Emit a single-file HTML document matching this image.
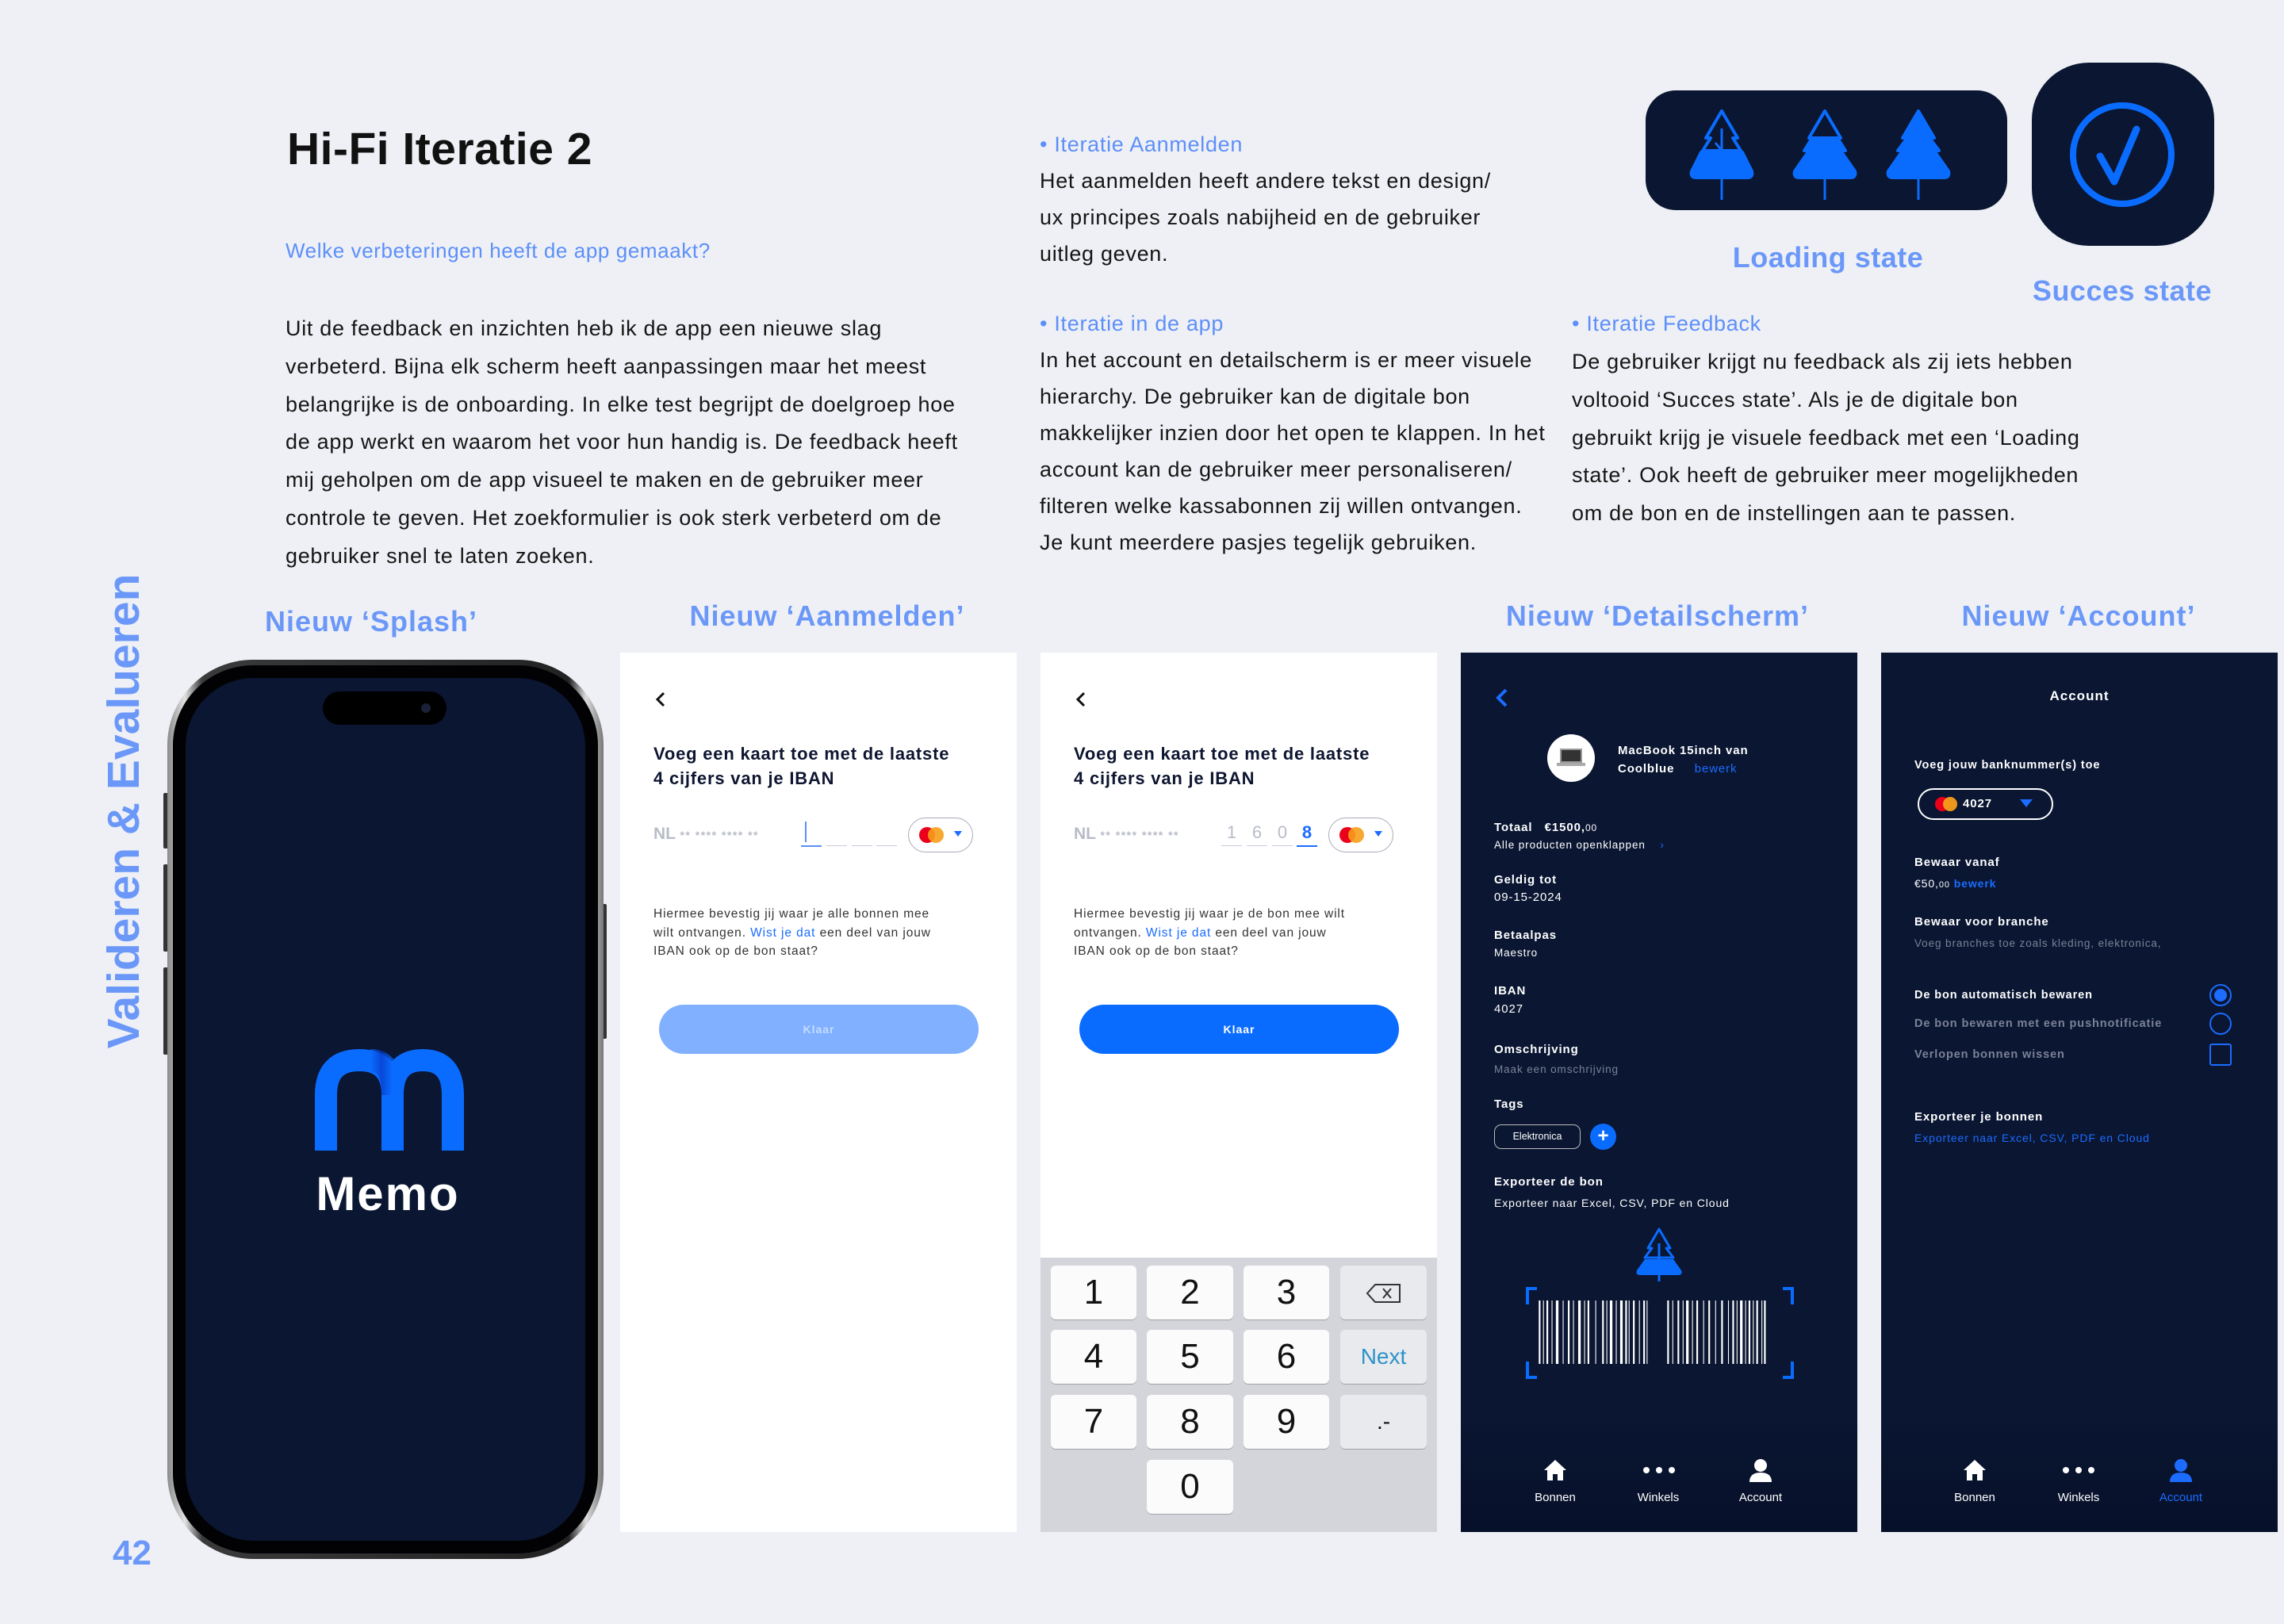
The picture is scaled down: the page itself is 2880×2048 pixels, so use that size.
<!DOCTYPE html>
<html><head><meta charset="utf-8"><style>
*{margin:0;padding:0;box-sizing:border-box}
body{width:2880px;height:2048px;background:#eef0f5;position:relative;overflow:hidden;font-family:"Liberation Sans",sans-serif;color:#151515}
.a{position:absolute;white-space:nowrap}
.t{font-size:27px;line-height:30px;letter-spacing:.7px}
.lb{color:#5d8ff8}
.nl{color:#6b98f8;font-size:36px;font-weight:bold;letter-spacing:1px;line-height:40px;transform:translateX(-50%)}
.scr{position:absolute;top:823px;width:500px;height:1109px;overflow:hidden}
.w{background:#fff}
.d{background:#0a1632}
.s{font-size:15px;line-height:20px;letter-spacing:.9px}
.b{font-weight:bold}
.g{color:#7b8296}
.bl{color:#1b6cff}
.key{position:absolute;background:#fbfbfb;border-radius:6px;box-shadow:0 1px 0 #9ea2a8;font-size:44px;color:#111;text-align:center;line-height:68px}
.kg{background:#e9eaed}
</style></head><body>

<div class="a" style="left:362px;top:158px;font-size:57px;font-weight:bold;line-height:60px;color:#111;letter-spacing:.5px">Hi-Fi Iteratie 2</div>
<div class="a lb" style="left:360px;top:301px;font-size:26px;line-height:30px;letter-spacing:.6px">Welke verbeteringen heeft de app gemaakt?</div>

<div class="a t" style="left:360px;top:391px;line-height:47.8px">Uit de feedback en inzichten heb ik de app een nieuwe slag<br>verbeterd. Bijna elk scherm heeft aanpassingen maar het meest<br>belangrijke is de onboarding. In elke test begrijpt de doelgroep hoe<br>de app werkt en waarom het voor hun handig is. De feedback heeft<br>mij geholpen om de app visueel te maken en de gebruiker meer<br>controle te geven. Het zoekformulier is ook sterk verbeterd om de<br>gebruiker snel te laten zoeken.</div>

<div class="a t lb" style="left:1311px;top:167px">• Iteratie Aanmelden</div>
<div class="a t" style="left:1311px;top:205px;line-height:46px">Het aanmelden heeft andere tekst en design/<br>ux principes zoals nabijheid en de gebruiker<br>uitleg geven.</div>

<div class="a t lb" style="left:1311px;top:393px">• Iteratie in de app</div>
<div class="a t" style="left:1311px;top:431px;line-height:46px">In het account en detailscherm is er meer visuele<br>hierarchy. De gebruiker kan de digitale bon<br>makkelijker inzien door het open te klappen. In het<br>account kan de gebruiker meer personaliseren/<br>filteren welke kassabonnen zij willen ontvangen.<br>Je kunt meerdere pasjes tegelijk gebruiken.</div>

<div class="a t lb" style="left:1982px;top:393px">• Iteratie Feedback</div>
<div class="a t" style="left:1982px;top:433px;line-height:47.8px">De gebruiker krijgt nu feedback als zij iets hebben<br>voltooid ‘Succes state’. Als je de digitale bon<br>gebruikt krijg je visuele feedback met een ‘Loading<br>state’. Ook heeft de gebruiker meer mogelijkheden<br>om de bon en de instellingen aan te passen.</div>

<!-- loading box -->
<div class="a" style="left:2075px;top:114px;width:456px;height:151px;background:#0a1632;border-radius:38px"></div>
<svg class="a" style="left:2075px;top:114px" width="456" height="151" viewBox="0 0 456 151">
 <g fill="#0a6cff" stroke="#0a6cff" stroke-width="4" stroke-linejoin="round">
  <g transform="translate(96,26)"><path d="M0 0 L20 34 L14 34 L24 50 L-24 50 L-14 34 L-20 34 Z" fill="none"/><path d="M-26 52 L26 52 L38 76 Q40 84 32 84 L-32 84 Q-40 84 -38 76 Z"/><path d="M0 22 V112 M-8 40 L0 50" fill="none" stroke-width="3"/></g>
  <g transform="translate(226,26)"><path d="M0 0 L20 34 L-20 34 Z" fill="none"/><path d="M-16 34 L16 34 L26 50 L20 50 L38 76 Q40 84 32 84 L-32 84 Q-40 84 -38 76 L-20 50 L-26 50 Z"/><path d="M0 84 V112" fill="none" stroke-width="3"/></g>
  <g transform="translate(344,26)"><path d="M0 0 L20 34 L14 34 L26 50 L20 50 L38 76 Q40 84 32 84 L-32 84 Q-40 84 -38 76 L-20 50 L-26 50 L-14 34 L-20 34 Z"/><path d="M0 84 V112" fill="none" stroke-width="3"/></g>
 </g>
</svg>
<!-- success -->
<div class="a" style="left:2562px;top:79px;width:230px;height:231px;background:#0a1632;border-radius:72px"></div>
<svg class="a" style="left:2562px;top:79px" width="230" height="231" viewBox="0 0 230 231">
 <circle cx="114" cy="116" r="62" fill="none" stroke="#0a6cff" stroke-width="8"/>
 <path d="M86 118 L104 150 L132 84" fill="none" stroke="#0a6cff" stroke-width="9" stroke-linecap="round" stroke-linejoin="round"/>
</svg>
<div class="a nl" style="left:2305px;top:305px;font-size:36px;letter-spacing:.5px">Loading state</div>
<div class="a nl" style="left:2676px;top:347px;font-size:36px;letter-spacing:.5px">Succes state</div>

<!-- vertical -->
<div class="a" style="left:156px;top:1023px;transform:translate(-50%,-50%) rotate(-90deg);font-family:'Liberation Sans Narrow','Liberation Sans',sans-serif;font-weight:bold;font-size:57px;color:#6b98f8;line-height:64px">Valideren &amp; Evalueren</div>
<div class="a" style="left:142px;top:1936px;font-size:44px;font-weight:bold;color:#6b98f8;line-height:46px">42</div>

<div class="a nl" style="left:468px;top:764px">Nieuw ‘Splash’</div>
<div class="a nl" style="left:1043px;top:757px">Nieuw ‘Aanmelden’</div>
<div class="a nl" style="left:2090px;top:757px">Nieuw ‘Detailscherm’</div>
<div class="a nl" style="left:2621px;top:757px">Nieuw ‘Account’</div>

<!-- phone -->
<div class="a" style="left:206px;top:1000px;width:6px;height:70px;background:#333;border-radius:2px"></div>
<div class="a" style="left:206px;top:1090px;width:6px;height:110px;background:#333;border-radius:2px"></div>
<div class="a" style="left:206px;top:1220px;width:6px;height:110px;background:#333;border-radius:2px"></div>
<div class="a" style="left:759px;top:1140px;width:6px;height:170px;background:#333;border-radius:2px"></div>
<div class="a" style="left:211px;top:832px;width:550px;height:1134px;border-radius:108px;background:linear-gradient(90deg,#8a8a8a,#e2e2e2 4%,#3a3a3a 8%,#222 92%,#ddd 96%,#777);padding:7px">
 <div style="width:100%;height:100%;border-radius:101px;background:#020204;padding:16px">
  <div style="width:100%;height:100%;border-radius:86px;background:#0a1632;position:relative">
   <div style="position:absolute;left:173px;top:17px;width:156px;height:42px;border-radius:21px;background:#000"></div>
   <div style="position:absolute;left:297px;top:32px;width:12px;height:12px;border-radius:6px;background:#1a2035"></div>
  </div>
 </div>
</div>
<svg class="a" style="left:397px;top:1323px" width="188" height="128" viewBox="0 0 188 128">
 <defs><linearGradient id="mg" x1="0" x2="1"><stop offset="0" stop-color="#0a6cff"/><stop offset=".5" stop-color="#0638c8"/><stop offset="1" stop-color="#0a6cff"/></linearGradient></defs>
 <path d="M14 128 V58 Q14 14 56 14 Q98 14 98 58 V128" fill="none" stroke="#0a6cff" stroke-width="28"/>
 <path d="M98 128 V58 Q98 14 136 14 Q174 14 174 58 V128" fill="none" stroke="#0a6cff" stroke-width="28"/>
 <path d="M70 14 Q98 14 98 58" fill="none" stroke="url(#mg)" stroke-width="28" opacity=".7"/>
</svg>
<div class="a" style="left:489px;top:1474px;transform:translateX(-50%);font-size:60px;font-weight:bold;color:#fff;line-height:64px;letter-spacing:2px">Memo</div>

<!-- screen 1 -->
<div class="scr w" style="left:782px">
 <svg class="a" style="left:42px;top:48px" width="20" height="22"><path d="M13 3 L5 11 L13 19" fill="none" stroke="#111" stroke-width="3"/></svg>
 <div class="a b" style="left:42px;top:112px;font-size:22px;line-height:31px;color:#0d1530;letter-spacing:.8px">Voeg een kaart toe met de laatste<br>4 cijfers van je IBAN</div>
 <div class="a" style="left:42px;top:217px;font-size:21px;font-weight:bold;color:#b8bcc8;line-height:24px">NL <span style="font-size:14px;letter-spacing:1.5px">** **** **** **</span></div>
 <div class="a" style="left:233px;top:213px;width:2px;height:26px;background:#5b8ff8"></div>
 <div class="a" style="left:228px;top:243px;width:26px;height:2px;background:#5b8ff8"></div>
 <div class="a" style="left:260px;top:243px;width:26px;height:1px;background:#ccd"></div>
 <div class="a" style="left:292px;top:243px;width:26px;height:1px;background:#ccd"></div>
 <div class="a" style="left:323px;top:243px;width:26px;height:1px;background:#ccd"></div>
 <div class="a" style="left:363px;top:208px;width:82px;height:44px;border:1.5px solid #aab;border-radius:22px"></div>
 <div class="a" style="left:377px;top:220px;width:20px;height:20px;border-radius:10px;background:#eb001b"></div>
 <div class="a" style="left:388px;top:220px;width:20px;height:20px;border-radius:10px;background:#f79e1b;opacity:.9"></div>
 <svg class="a" style="left:421px;top:225px" width="10" height="8"><path d="M0 0H10L5 7Z" fill="#1b6cff"/></svg>
 <div class="a s" style="left:42px;top:318px;font-size:15.5px;line-height:23.5px;color:#333;letter-spacing:.9px">Hiermee bevestig jij waar je alle bonnen mee<br>wilt ontvangen. <span class="bl">Wist je dat</span> een deel van jouw<br>IBAN ook op de bon staat?</div>
 <div class="a" style="left:49px;top:444px;width:403px;height:62px;border-radius:31px;background:#80b0ff;color:#c6dcff;font-size:14px;font-weight:bold;text-align:center;line-height:62px;letter-spacing:1px">Klaar</div>
</div>

<!-- screen 2 -->
<div class="scr w" style="left:1312px">
 <svg class="a" style="left:42px;top:48px" width="20" height="22"><path d="M13 3 L5 11 L13 19" fill="none" stroke="#111" stroke-width="3"/></svg>
 <div class="a b" style="left:42px;top:112px;font-size:22px;line-height:31px;color:#0d1530;letter-spacing:.8px">Voeg een kaart toe met de laatste<br>4 cijfers van je IBAN</div>
 <div class="a" style="left:42px;top:217px;font-size:21px;font-weight:bold;color:#b8bcc8;line-height:24px">NL <span style="font-size:14px;letter-spacing:1.5px">** **** **** **</span></div>
 <div class="a" style="left:228px;top:214px;width:26px;text-align:center;font-size:22px;color:#b8bcc8;line-height:26px">1</div>
 <div class="a" style="left:260px;top:214px;width:26px;text-align:center;font-size:22px;color:#b8bcc8;line-height:26px">6</div>
 <div class="a" style="left:292px;top:214px;width:26px;text-align:center;font-size:22px;color:#b8bcc8;line-height:26px">0</div>
 <div class="a b" style="left:323px;top:214px;width:26px;text-align:center;font-size:22px;color:#1b6cff;line-height:26px">8</div>
 <div class="a" style="left:228px;top:243px;width:26px;height:1px;background:#ccd"></div>
 <div class="a" style="left:260px;top:243px;width:26px;height:1px;background:#ccd"></div>
 <div class="a" style="left:292px;top:243px;width:26px;height:1px;background:#ccd"></div>
 <div class="a" style="left:323px;top:243px;width:26px;height:2px;background:#1b6cff"></div>
 <div class="a" style="left:363px;top:208px;width:82px;height:44px;border:1.5px solid #aab;border-radius:22px"></div>
 <div class="a" style="left:377px;top:220px;width:20px;height:20px;border-radius:10px;background:#eb001b"></div>
 <div class="a" style="left:388px;top:220px;width:20px;height:20px;border-radius:10px;background:#f79e1b;opacity:.9"></div>
 <svg class="a" style="left:421px;top:225px" width="10" height="8"><path d="M0 0H10L5 7Z" fill="#1b6cff"/></svg>
 <div class="a s" style="left:42px;top:318px;font-size:15.5px;line-height:23.5px;color:#333;letter-spacing:.9px">Hiermee bevestig jij waar je de bon mee wilt<br>ontvangen. <span class="bl">Wist je dat</span> een deel van jouw<br>IBAN ook op de bon staat?</div>
 <div class="a" style="left:49px;top:444px;width:403px;height:62px;border-radius:31px;background:#0a6cff;color:#fff;font-size:14px;font-weight:bold;text-align:center;line-height:62px;letter-spacing:1px">Klaar</div>
 <div class="a" style="left:0;top:763px;width:500px;height:346px;background:#d3d5da"></div>
 <div class="key" style="left:13px;top:773px;width:108px">1</div>
 <div class="key" style="left:134px;top:773px;width:109px">2</div>
 <div class="key" style="left:256px;top:773px;width:108px">3</div>
 <div class="key kg" style="left:378px;top:773px;width:109px"><svg width="46" height="26" viewBox="0 0 46 26" style="margin-top:21px"><path d="M12 2H43V24H12L2 13Z" fill="none" stroke="#333" stroke-width="2"/><path d="M22 7L32 19M32 7L22 19" stroke="#333" stroke-width="2"/></svg></div>
 <div class="key" style="left:13px;top:854px;width:108px">4</div>
 <div class="key" style="left:134px;top:854px;width:109px">5</div>
 <div class="key" style="left:256px;top:854px;width:108px">6</div>
 <div class="key kg" style="left:378px;top:854px;width:109px;font-size:28px;color:#2d93c8">Next</div>
 <div class="key" style="left:13px;top:936px;width:108px">7</div>
 <div class="key" style="left:134px;top:936px;width:109px">8</div>
 <div class="key" style="left:256px;top:936px;width:108px">9</div>
 <div class="key kg" style="left:378px;top:936px;width:109px;font-size:28px">.-</div>
 <div class="key kg" style="left:13px;top:1018px;width:108px"></div>
 <div class="key" style="left:134px;top:1018px;width:109px">0</div>
 <div class="key kg" style="left:256px;top:1018px;width:108px"></div>
 <div class="key kg" style="left:378px;top:1018px;width:109px"></div>
</div>

<!-- detail -->
<div class="scr d" style="left:1842px;color:#fff">
 <svg class="a" style="left:42px;top:44px" width="22" height="26"><path d="M15 3 L5 13 L15 23" fill="none" stroke="#1b6cff" stroke-width="4"/></svg>
 <div class="a" style="left:109px;top:103px;width:60px;height:60px;border-radius:30px;background:#fff"></div>
 <div class="a" style="left:125px;top:121px;width:28px;height:18px;background:#333;border:2px solid #999"></div>
 <div class="a" style="left:121px;top:139px;width:36px;height:4px;background:#aaa"></div>
 <div class="a s b" style="left:198px;top:112px;line-height:23px">MacBook 15inch van<br>Coolblue &nbsp;&nbsp;&nbsp;&nbsp;<span class="bl" style="font-weight:normal">bewerk</span></div>
 <div class="a s" style="left:42px;top:210px;line-height:22px"><b>Totaal &nbsp;&nbsp;€1500,</b><span style="font-size:12px">00</span><br><span style="font-size:13.5px">Alle producten openklappen &nbsp;&nbsp;&nbsp;<span class="bl">›</span></span></div>
 <div class="a s" style="left:42px;top:276px;line-height:22px"><b>Geldig tot</b><br>09-15-2024</div>
 <div class="a s" style="left:42px;top:346px;line-height:22px"><b>Betaalpas</b><br><span style="font-size:13.5px">Maestro</span></div>
 <div class="a s" style="left:42px;top:415px;line-height:23px"><b>IBAN</b><br>4027</div>
 <div class="a s" style="left:42px;top:488px;line-height:25px"><b>Omschrijving</b><br><span class="g" style="font-size:13.5px">Maak een omschrijving</span></div>
 <div class="a s b" style="left:42px;top:560px">Tags</div>
 <div class="a" style="left:42px;top:595px;width:109px;height:31px;border:1.5px solid #bbb;border-radius:9px;font-size:12.5px;text-align:center;line-height:28px">Elektronica</div>
 <div class="a" style="left:163px;top:594px;width:33px;height:33px;border-radius:17px;background:#0a6cff;text-align:center;font-size:24px;line-height:32px;font-weight:bold">+</div>
 <div class="a s" style="left:42px;top:654px;line-height:27px"><b>Exporteer de bon</b><br><span style="font-size:14px">Exporteer naar Excel, CSV, PDF en Cloud</span></div>
 <svg class="a" style="left:218px;top:725px" width="64" height="68" viewBox="0 0 64 68"><path d="M32 2 L46 26 L41 26 L50 38 L14 38 L23 26 L18 26 Z" fill="none" stroke="#0a6cff" stroke-width="3" stroke-linejoin="round"/><path d="M14 40 L50 40 L60 54 Q62 60 56 60 L8 60 Q2 60 4 54 Z" fill="#0a6cff"/><path d="M32 20 V68" stroke="#0a6cff" stroke-width="3"/></svg>
 <svg class="a" style="left:82px;top:800px" width="338" height="116" viewBox="0 0 338 116">
  <path d="M14 2H2V22M324 2H336V22M14 114H2V94M324 114H336V94" fill="none" stroke="#0a6cff" stroke-width="4"/>
  <g fill="#fff" transform="translate(-1,0) scale(1.08,1)">
   <rect x="16" y="17" width="2" height="80"/><rect x="21" y="17" width="1" height="80"/><rect x="25" y="17" width="2" height="80"/><rect x="31" y="17" width="1" height="80"/><rect x="36" y="17" width="3" height="80"/><rect x="44" y="17" width="1" height="80"/><rect x="50" y="17" width="2" height="80"/><rect x="56" y="17" width="1" height="80"/><rect x="62" y="17" width="3" height="80"/><rect x="69" y="17" width="1" height="80"/><rect x="73" y="17" width="2" height="80"/><rect x="82" y="17" width="1" height="80"/><rect x="90" y="17" width="2" height="80"/><rect x="95" y="17" width="1" height="80"/><rect x="99" y="17" width="3" height="80"/><rect x="106" y="17" width="1" height="80"/><rect x="111" y="17" width="3" height="80"/><rect x="117" y="17" width="2" height="80"/><rect x="121" y="17" width="1" height="80"/><rect x="126" y="17" width="2" height="80"/><rect x="133" y="17" width="1" height="80"/><rect x="138" y="17" width="2" height="80"/><rect x="142" y="17" width="1" height="80"/>
   <rect x="166" y="17" width="2" height="80"/><rect x="172" y="17" width="1" height="80"/><rect x="178" y="17" width="2" height="80"/><rect x="184" y="17" width="1" height="80"/><rect x="188" y="17" width="3" height="80"/><rect x="195" y="17" width="1" height="80"/><rect x="200" y="17" width="2" height="80"/><rect x="208" y="17" width="1" height="80"/><rect x="214" y="17" width="2" height="80"/><rect x="222" y="17" width="1" height="80"/><rect x="229" y="17" width="2" height="80"/><rect x="237" y="17" width="1" height="80"/><rect x="242" y="17" width="2" height="80"/><rect x="247" y="17" width="1" height="80"/><rect x="251" y="17" width="3" height="80"/><rect x="257" y="17" width="1" height="80"/><rect x="261" y="17" width="2" height="80"/><rect x="266" y="17" width="1" height="80"/><rect x="270" y="17" width="2" height="80"/><rect x="276" y="17" width="1" height="80"/><rect x="279" y="17" width="2" height="80"/>
  </g>
 </svg>
 <div class="a" style="left:0;top:960px;width:500px;height:149px;background:linear-gradient(#0a1632,#07102a)"></div>
 <svg class="a" style="left:104px;top:1016px" width="30" height="30" viewBox="0 0 30 30"><path d="M15 2 L29 15 H25 V28 H18 V20 H12 V28 H5 V15 H1 Z" fill="#fff"/></svg>
 <svg class="a" style="left:229px;top:1026px" width="42" height="10"><circle cx="5" cy="5" r="4" fill="#fff"/><circle cx="21" cy="5" r="4" fill="#fff"/><circle cx="37" cy="5" r="4" fill="#fff"/></svg>
 <svg class="a" style="left:363px;top:1016px" width="30" height="30" viewBox="0 0 30 30"><circle cx="15" cy="9" r="8" fill="#fff"/><path d="M1 30 Q1 18 15 18 Q29 18 29 30Z" fill="#fff"/></svg>
 <div class="a" style="left:119px;top:1057px;transform:translateX(-50%);font-size:15px;line-height:18px">Bonnen</div>
 <div class="a" style="left:249px;top:1057px;transform:translateX(-50%);font-size:15px;line-height:18px">Winkels</div>
 <div class="a" style="left:378px;top:1057px;transform:translateX(-50%);font-size:15px;line-height:18px">Account</div>
</div>

<!-- account -->
<div class="scr d" style="left:2372px;color:#fff">
 <div class="a s b" style="left:250px;top:45px;transform:translateX(-50%);font-size:17px;letter-spacing:1px">Account</div>
 <div class="a s b" style="left:42px;top:132px;font-size:14.5px">Voeg jouw banknummer(s) toe</div>
 <div class="a" style="left:46px;top:171px;width:171px;height:40px;border:2.5px solid #fff;border-radius:20px"></div>
 <div class="a" style="left:68px;top:182px;width:18px;height:18px;border-radius:9px;background:#eb001b"></div>
 <div class="a" style="left:78px;top:182px;width:18px;height:18px;border-radius:9px;background:#f79e1b;opacity:.95"></div>
 <div class="a s b" style="left:103px;top:181px">4027</div>
 <svg class="a" style="left:175px;top:185px" width="16" height="11"><path d="M0 0H16L8 10Z" fill="#1b6cff"/></svg>
 <div class="a s" style="left:42px;top:251px;line-height:27px"><b>Bewaar vanaf</b><br><span style="font-size:14px">€50,<span style="font-size:11px">00</span> <b class="bl">bewerk</b></span></div>
 <div class="a s" style="left:42px;top:326px;line-height:27px"><b>Bewaar voor branche</b><br><span class="g" style="font-size:13.5px">Voeg branches toe zoals kleding, elektronica,</span></div>
 <div class="a s b" style="left:42px;top:422px;font-size:14.5px">De bon automatisch bewaren</div>
 <div class="a s b g" style="left:42px;top:458px;font-size:14.5px">De bon bewaren met een pushnotificatie</div>
 <div class="a s b g" style="left:42px;top:497px;font-size:14.5px">Verlopen bonnen wissen</div>
 <div class="a" style="left:414px;top:418px;width:28px;height:28px;border-radius:14px;border:2px solid #1b6cff"></div>
 <div class="a" style="left:420px;top:424px;width:16px;height:16px;border-radius:8px;background:#1b6cff"></div>
 <div class="a" style="left:414px;top:454px;width:28px;height:28px;border-radius:14px;border:2px solid #1b6cff"></div>
 <div class="a" style="left:414px;top:493px;width:28px;height:28px;border-radius:3px;border:2px solid #1b6cff"></div>
 <div class="a s" style="left:42px;top:572px;line-height:27px"><b>Exporteer je bonnen</b><br><span class="bl" style="font-size:14px">Exporteer naar Excel, CSV, PDF en Cloud</span></div>
 <div class="a" style="left:0;top:960px;width:500px;height:149px;background:linear-gradient(#0a1632,#07102a)"></div>
 <svg class="a" style="left:103px;top:1016px" width="30" height="30" viewBox="0 0 30 30"><path d="M15 2 L29 15 H25 V28 H18 V20 H12 V28 H5 V15 H1 Z" fill="#fff"/></svg>
 <svg class="a" style="left:228px;top:1026px" width="42" height="10"><circle cx="5" cy="5" r="4" fill="#fff"/><circle cx="21" cy="5" r="4" fill="#fff"/><circle cx="37" cy="5" r="4" fill="#fff"/></svg>
 <svg class="a" style="left:363px;top:1016px" width="30" height="30" viewBox="0 0 30 30"><circle cx="15" cy="9" r="8" fill="#1b6cff"/><path d="M1 30 Q1 18 15 18 Q29 18 29 30Z" fill="#1b6cff"/></svg>
 <div class="a" style="left:118px;top:1057px;transform:translateX(-50%);font-size:15px;line-height:18px">Bonnen</div>
 <div class="a" style="left:249px;top:1057px;transform:translateX(-50%);font-size:15px;line-height:18px">Winkels</div>
 <div class="a bl" style="left:378px;top:1057px;transform:translateX(-50%);font-size:15px;line-height:18px">Account</div>
</div>

</body></html>
